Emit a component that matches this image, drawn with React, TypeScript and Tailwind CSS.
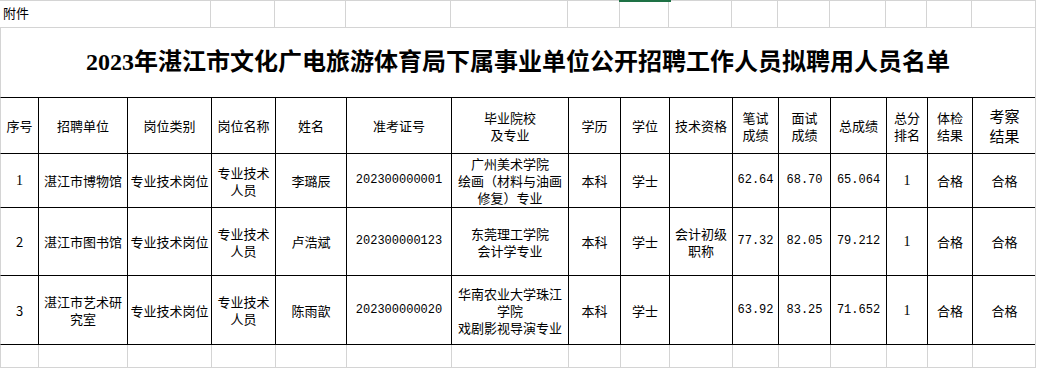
const COLS = 'grid-cols-[38px_89px_84px_64px_71px_105px_117px_52px_49px_63px_46px_52px_56px_41px_45px_63px]';

const CJK = { fontFamily: '"Noto Sans CJK SC", "Liberation Sans", sans-serif' };

interface Row {
  no: string;
  unit: string[];
  post: string;
  title: string[];
  name: string;
  ticket: string;
  school: string[];
  edu: string;
  degree: string;
  cert: string[];
  written: string;
  interview: string;
  total: string;
  rank: string;
  exam: string;
  check: string;
  h: string;
}

const rows: Row[] = [
  {
    no: '1',
    unit: ['湛江市博物馆'],
    post: '专业技术岗位',
    title: ['专业技术', '人员'],
    name: '李璐辰',
    ticket: '202300000001',
    school: ['广州美术学院', '绘画（材料与油画', '修复）专业'],
    edu: '本科',
    degree: '学士',
    cert: [],
    written: '62.64',
    interview: '68.70',
    total: '65.064',
    rank: '1',
    exam: '合格',
    check: '合格',
    h: 'h-[54px]',
  },
  {
    no: '2',
    unit: ['湛江市图书馆'],
    post: '专业技术岗位',
    title: ['专业技术', '人员'],
    name: '卢浩斌',
    ticket: '202300000123',
    school: ['东莞理工学院', '会计学专业'],
    edu: '本科',
    degree: '学士',
    cert: ['会计初级', '职称'],
    written: '77.32',
    interview: '82.05',
    total: '79.212',
    rank: '1',
    exam: '合格',
    check: '合格',
    h: 'h-[68px]',
  },
  {
    no: '3',
    unit: ['湛江市艺术研', '究室'],
    post: '专业技术岗位',
    title: ['专业技术', '人员'],
    name: '陈雨歆',
    ticket: '202300000020',
    school: ['华南农业大学珠江', '学院', '戏剧影视导演专业'],
    edu: '本科',
    degree: '学士',
    cert: [],
    written: '63.92',
    interview: '83.25',
    total: '71.652',
    rank: '1',
    exam: '合格',
    check: '合格',
    h: 'h-[69px]',
  },
];

function Cell({ lines, mono, serif, last }: { lines: string[]; mono?: boolean; serif?: boolean; last?: boolean }) {
  const font = mono
    ? 'font-["Liberation_Mono"] text-[12px]'
    : serif
      ? 'font-["Liberation_Serif"] text-[14px]'
      : 'text-[13px]';
  return (
    <div
      className={`flex flex-col items-center justify-center text-center leading-[17px] text-black ${font} ${last ? '' : 'border-r border-black'}`}
    >
      {lines.map((l, i) => (
        <span key={i} className="whitespace-nowrap">{l}</span>
      ))}
    </div>
  );
}

// which cells of the top sheet row show a gridline on their right
const topLines = [false, false, true, true, true, true, true, true, true, true, true, true, true, true, true, false];

export default function App() {
  return (
    <div className="relative w-[1037px] h-[368px] overflow-hidden bg-white" style={CJK}>
      {/* selected cell marker */}
      <div className="absolute top-0 left-[619px] w-[52px] h-[2px] bg-[#1e7145]" />

      <div className="w-[1036px] border-r border-[#d4d4d4]">
        {/* 附件 row */}
        <div className={`grid ${COLS} h-[28px] border-t border-b border-[#d4d4d4]`}>
          {topLines.map((line, i) => (
            <div key={i} className={line ? 'border-r border-[#d4d4d4]' : ''}>
              {i === 0 && (
                <span className="block pl-[3px] pt-[3px] text-[13px] leading-[18px] whitespace-nowrap text-black">附件</span>
              )}
            </div>
          ))}
        </div>

        {/* title row */}
        <div className="h-[70px] border-l border-[#d4d4d4] border-b border-b-black flex items-center justify-center">
          <h1
            className="text-[24px] font-bold leading-none text-black pb-[1px]"
            style={{ fontFamily: '"Liberation Serif", "Noto Sans CJK SC", serif' }}
          >
            2023年湛江市文化广电旅游体育局下属事业单位公开招聘工作人员拟聘用人员名单
          </h1>
        </div>

        {/* header row */}
        <div className={`grid ${COLS} h-[56px] border-l border-[#d4d4d4] border-b border-b-black`}>
          <Cell lines={['序号']} />
          <Cell lines={['招聘单位']} />
          <Cell lines={['岗位类别']} />
          <Cell lines={['岗位名称']} />
          <Cell lines={['姓名']} />
          <Cell lines={['准考证号']} />
          <Cell lines={['毕业院校', '及专业']} />
          <Cell lines={['学历']} />
          <Cell lines={['学位']} />
          <Cell lines={['技术资格']} />
          <Cell lines={['笔试', '成绩']} />
          <Cell lines={['面试', '成绩']} />
          <Cell lines={['总成绩']} />
          <Cell lines={['总分', '排名']} />
          <Cell lines={['体检', '结果']} />
          <div className="flex flex-col items-center justify-center text-center text-[15px] leading-[20px] text-black">
            <span>考察</span>
            <span>结果</span>
          </div>
        </div>

        {/* data rows */}
        {rows.map((r) => (
          <div key={r.no} className={`grid ${COLS} ${r.h} border-l border-[#d4d4d4] border-b border-b-black`}>
            <Cell lines={[r.no]} serif={r.no === '1'} />
            <Cell lines={r.unit} />
            <Cell lines={[r.post]} />
            <Cell lines={r.title} />
            <Cell lines={[r.name]} />
            <Cell lines={[r.ticket]} mono />
            <Cell lines={r.school} />
            <Cell lines={[r.edu]} />
            <Cell lines={[r.degree]} />
            <Cell lines={r.cert} />
            <Cell lines={[r.written]} mono />
            <Cell lines={[r.interview]} mono />
            <Cell lines={[r.total]} mono />
            <Cell lines={[r.rank]} serif />
            <Cell lines={[r.exam]} />
            <Cell lines={[r.check]} last />
          </div>
        ))}

        {/* empty spreadsheet row */}
        <div className={`grid ${COLS} h-[23px] border-l border-[#d4d4d4] border-b border-b-[#d4d4d4]`}>
          {topLines.map((_, i) => (
            <div key={i} className={i < 15 ? 'border-r border-[#d4d4d4]' : ''} />
          ))}
        </div>
      </div>
    </div>
  );
}
